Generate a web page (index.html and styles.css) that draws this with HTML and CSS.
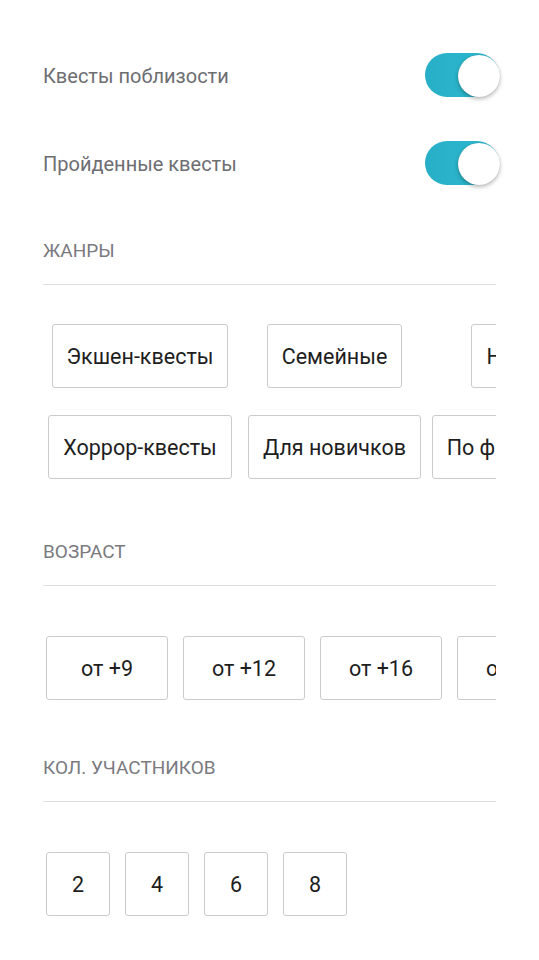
FILE: index.html
```html
<!DOCTYPE html>
<html lang="ru">
<head>
<meta charset="utf-8">
<title>Фильтры</title>
<link rel="stylesheet" href="styles.css">
</head>
<body>
<main class="page">
  <div class="toggle-row">
    <span class="toggle-label">Квесты поблизости</span>
    <span class="switch"><span class="knob"></span></span>
  </div>
  <div class="toggle-row">
    <span class="toggle-label">Пройденные квесты</span>
    <span class="switch"><span class="knob"></span></span>
  </div>

  <section class="section section--genres">
    <h2 class="section-title">ЖАНРЫ</h2>
    <div class="genre-grid">
      <span class="chip">Экшен-квесты</span>
      <span class="chip">Хоррор-квесты</span>
      <span class="chip">Семейные</span>
      <span class="chip">Для новичков</span>
      <span class="chip">Нуар</span>
      <span class="chip">По фильмам</span>
    </div>
  </section>

  <section class="section section--age">
    <h2 class="section-title">ВОЗРАСТ</h2>
    <div class="chip-row">
      <span class="chip chip--age">от +9</span>
      <span class="chip chip--age">от +12</span>
      <span class="chip chip--age">от +16</span>
      <span class="chip chip--age">от +18</span>
    </div>
  </section>

  <section class="section section--people">
    <h2 class="section-title">КОЛ. УЧАСТНИКОВ</h2>
    <div class="chip-row">
      <span class="chip chip--num">2</span>
      <span class="chip chip--num">4</span>
      <span class="chip chip--num">6</span>
      <span class="chip chip--num">8</span>
    </div>
  </section>
</main>
</body>
</html>
```

FILE: styles.css
```css
* { box-sizing: border-box; }

html, body {
  margin: 0;
  background: #ffffff;
}

body {
  font-family: Roboto, "Noto Sans", sans-serif;
  width: 539px;
  height: 960px;
  overflow: hidden;
}

.page {
  padding: 31px 43px 0 43px;
}

.toggle-row {
  height: 88px;
  display: flex;
  align-items: center;
  justify-content: space-between;
}

.toggle-label {
  font-size: 20px;
  color: #6d6d72;
  padding-top: 1px;
}

.switch {
  position: relative;
  width: 74px;
  height: 44px;
  border-radius: 22px;
  background: linear-gradient(90deg, #27afc7 0%, #2eb9cf 100%);
  margin-right: -3px;
  flex-shrink: 0;
}

.knob {
  position: absolute;
  width: 42px;
  height: 42px;
  border-radius: 50%;
  background: #ffffff;
  right: -1px;
  top: 2px;
  box-shadow: 0 2px 4px rgba(0, 0, 0, 0.28), 0 0 1px rgba(0, 0, 0, 0.2);
}

.section-title {
  margin: 0;
  font-size: 19px;
  line-height: 20px;
  font-weight: 400;
  color: #7a7a7f;
  padding-bottom: 23px;
  border-bottom: 1px solid #dedede;
}

.section--genres { margin-top: 34px; }
.section--age { margin-top: 63px; }
.section--people { margin-top: 58px; }

.genre-grid {
  margin-top: 39px;
  overflow: hidden;
  display: grid;
  grid-auto-flow: column;
  grid-template-rows: 64px 64px;
  grid-template-columns: 188px 171px 152px;
  column-gap: 15px;
  row-gap: 27px;
  padding-left: 3px;
  justify-items: center;
}

.chip {
  height: 64px;
  border: 1px solid #cbcbcb;
  border-radius: 3px;
  padding: 0 14px;
  display: flex;
  align-items: center;
  justify-content: center;
  font-size: 21.5px;
  color: #1e1e1e;
  white-space: nowrap;
  background: #fff;
}

.chip-row {
  margin-top: 50px;
  display: flex;
  gap: 15px;
  padding-left: 3px;
  overflow: hidden;
}

.chip--age {
  width: 122px;
  flex-shrink: 0;
}

.chip--num {
  width: 64px;
  flex-shrink: 0;
  padding: 0;
}
```
